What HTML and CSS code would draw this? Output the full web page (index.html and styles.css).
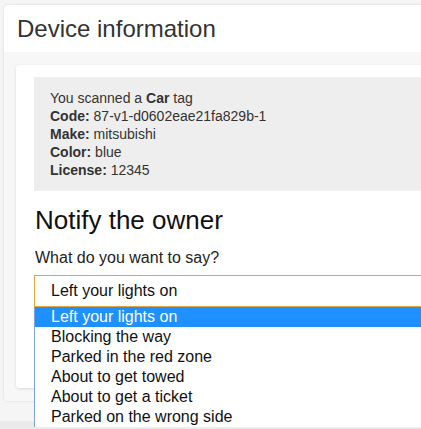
FILE: index.html
```html
<!DOCTYPE html>
<html lang="en">
<head>
    <meta charset="UTF-8">
    <meta name="viewport" content="width=device-width, initial-scale=1.0">
    <title>Device information</title>
    <link rel="stylesheet" href="styles.css">
</head>
<body>
    <div class="page">
        <div class="card">
            <div class="card-header">Device information</div>
            <div class="card-body">
                <div class="panel">
                    <div class="info">
                        You scanned a <b>Car</b> tag<br>
                        <b>Code:</b> 87-v1-d0602eae21fa829b-1<br>
                        <b>Make:</b> mitsubishi<br>
                        <b>Color:</b> blue<br>
                        <b>License:</b> 12345
                    </div>

                    <h2>Notify the owner</h2>
                    <label class="field-label">What do you want to say?</label>
                    <div class="select-wrap">
                        <div class="select">Left your lights on</div>
                        <ul class="options">
                            <li class="selected">Left your lights on</li>
                            <li>Blocking the way</li>
                            <li>Parked in the red zone</li>
                            <li>About to get towed</li>
                            <li>About to get a ticket</li>
                            <li>Parked on the wrong side</li>
                        </ul>
                    </div>
                    <div class="form-actions"></div>
                </div>
            </div>
        </div>
    </div>
    <div class="footer"></div>
</body>
</html>
```

FILE: styles.css
```css
html, body {
    margin: 0;
    padding: 0;
    overflow: hidden;
}
body {
    font-family: "Liberation Sans", Arial, sans-serif;
    background-color: #f5f5f5;
    color: #333;
}
.page {
    padding: 5px 0 0 4px;
}
.card {
    width: 640px;
    background-color: #fff;
    border-radius: 4px;
    box-shadow: 0 0 3px rgba(0, 0, 0, 0.12);
}
.card-header {
    font-size: 24px;
    line-height: 27px;
    padding: 10px 13px;
    color: #333;
}
.card-body {
    background-color: #f7f7f7;
    padding: 13px 12px;
    border-radius: 0 0 4px 4px;
}
.panel {
    background-color: #fff;
    border-radius: 3px;
    box-shadow: 0 1px 3px rgba(0, 0, 0, 0.12);
    padding: 12px 18px 31px;
}
.info {
    background-color: #eee;
    padding: 12px 16px;
    font-size: 14px;
    line-height: 18px;
    color: #333;
}
h2 {
    font-size: 26px;
    font-weight: normal;
    line-height: 30px;
    margin: 14px 0 0 1px;
    color: #111;
}
.field-label {
    display: block;
    font-size: 16px;
    line-height: 18px;
    margin: 14px 0 8px 1px;
    color: #222;
}
.select-wrap {
    position: relative;
}
.select {
    height: 30px;
    line-height: 30px;
    border: 1px solid #e6a440;
    padding-left: 16px;
    font-size: 16px;
    color: #111;
}
.options {
    position: absolute;
    top: 100%;
    left: 0;
    right: 0;
    margin: 0;
    padding: 0;
    list-style-type: none;
    background-color: #fff;
    border-left: 1px solid #7da3d8;
    z-index: 2;
}
.options li {
    height: 20px;
    line-height: 20px;
    padding-left: 16px;
    font-size: 16px;
    color: #111;
}
.options li.selected {
    background-color: #1e90ff;
    color: #fff;
}
.form-actions {
    height: 50px;
}
.footer {
    margin-top: 20px;
    height: 40px;
    background-color: #ebebeb;
}
```
